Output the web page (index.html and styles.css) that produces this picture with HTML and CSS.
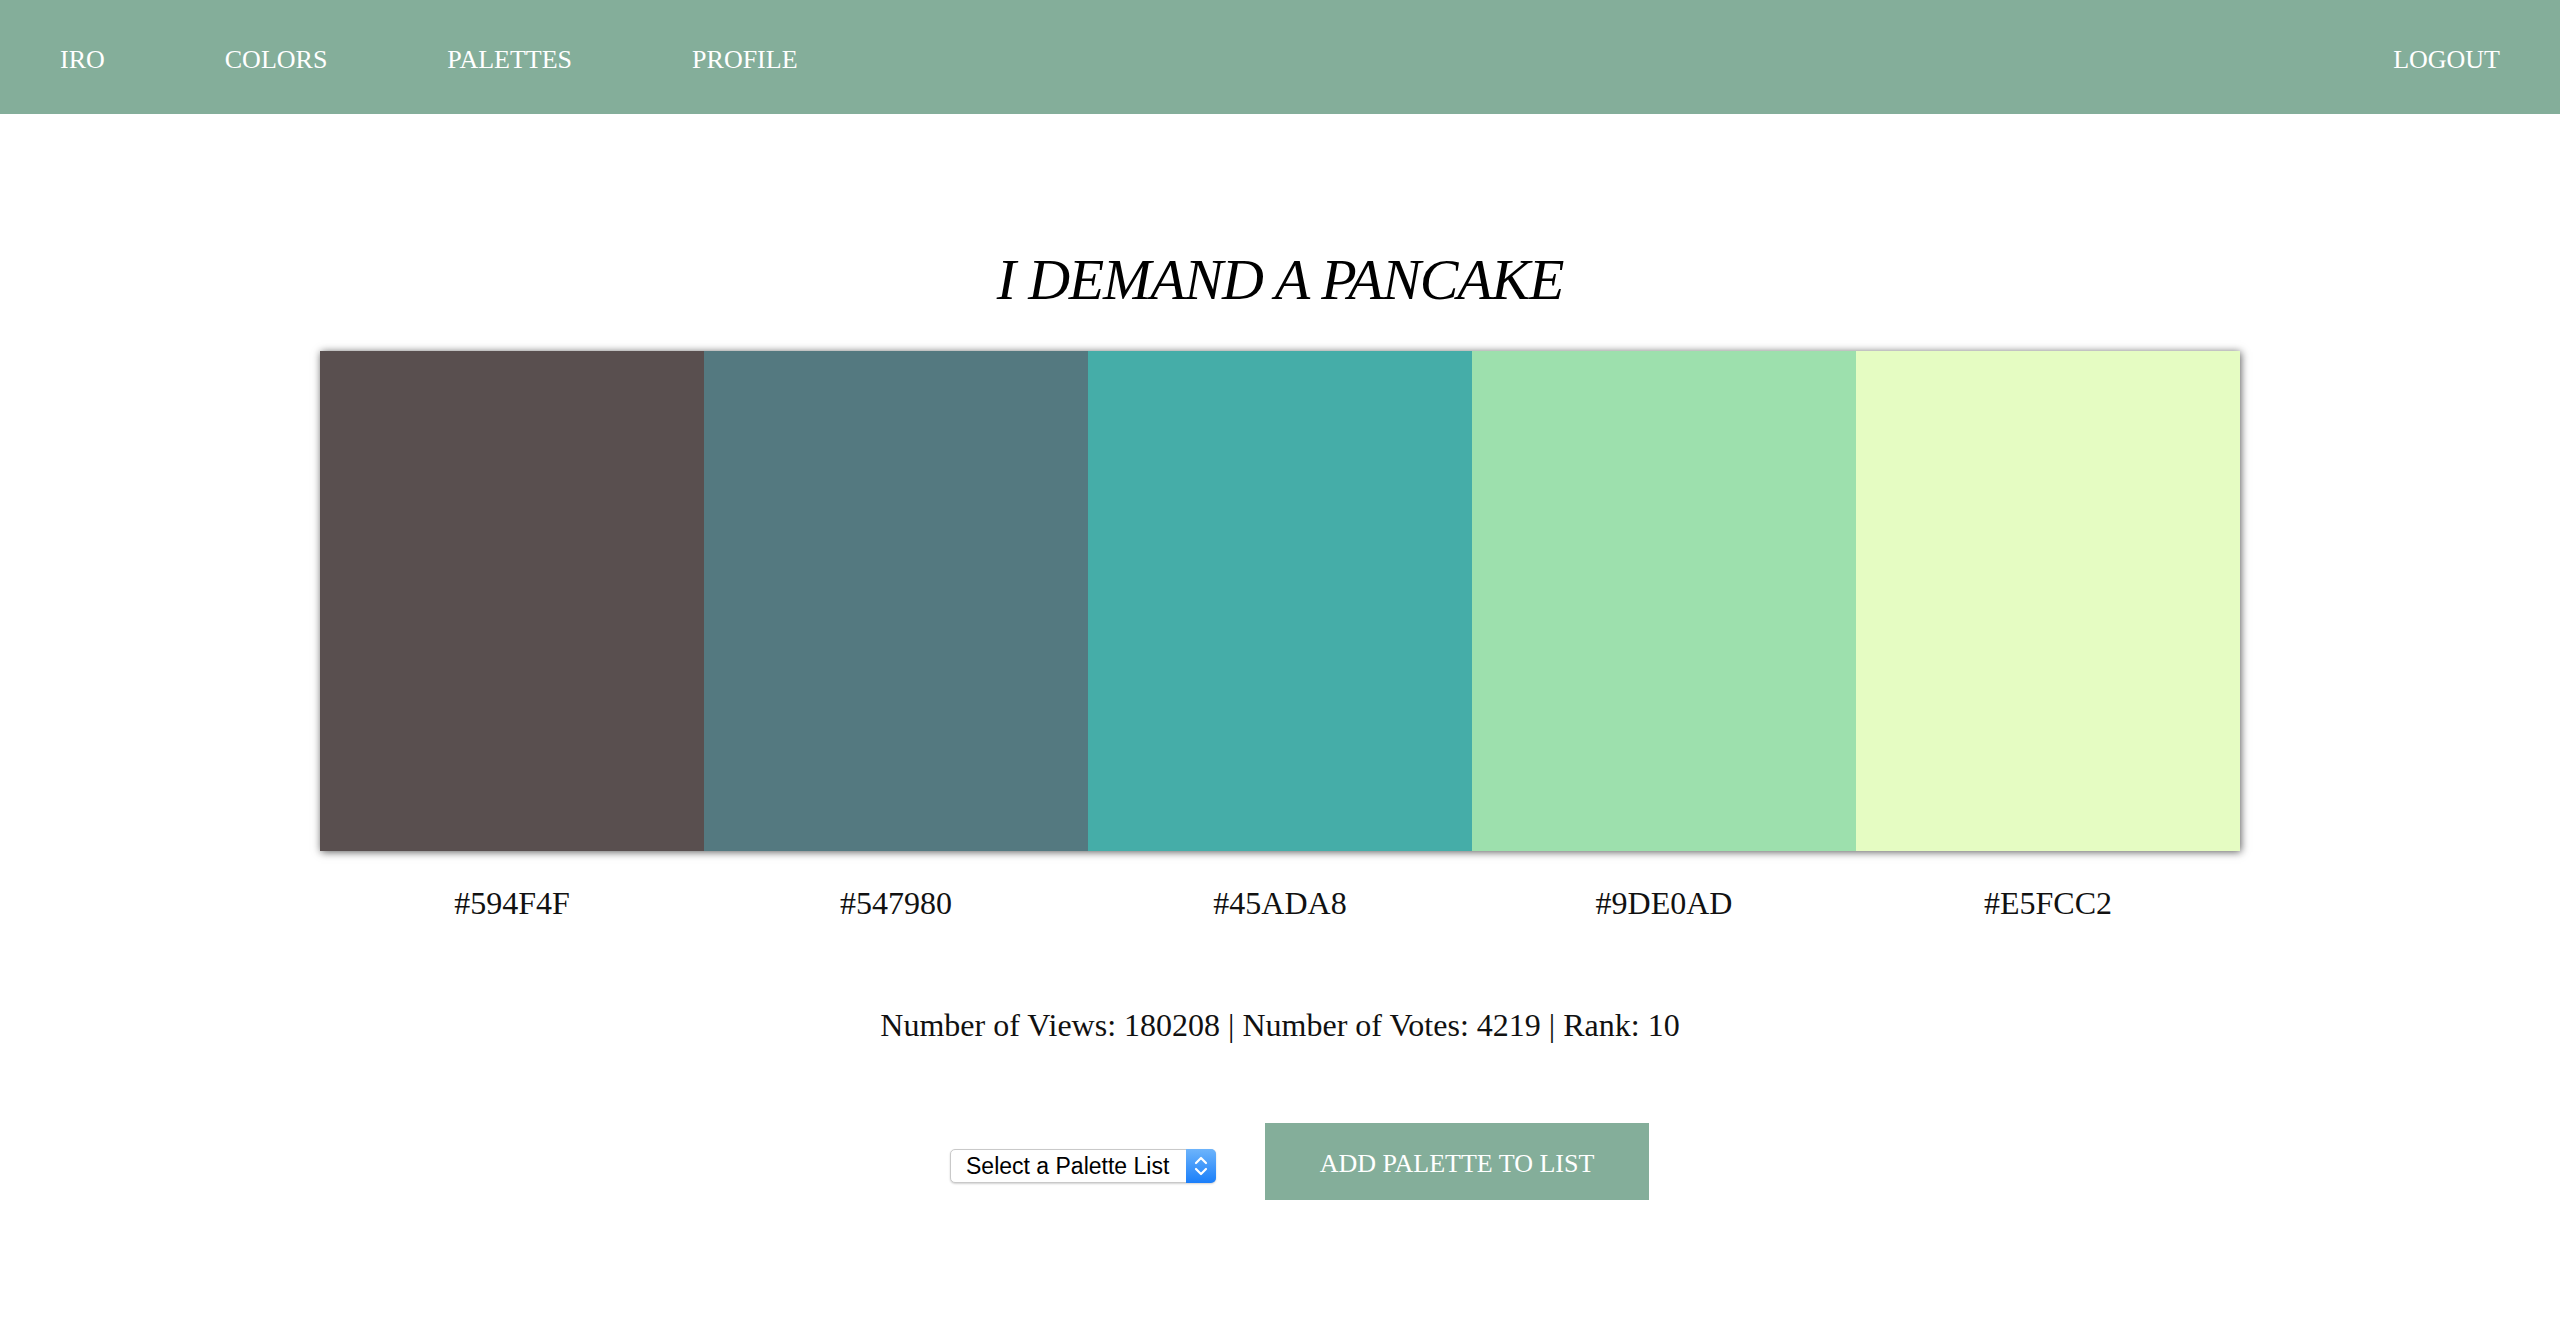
FILE: index.html
```html
<!DOCTYPE html>
<html lang="en">
<head>
<meta charset="utf-8">
<title>Iro - I Demand A Pancake</title>
<link rel="stylesheet" href="styles.css">
</head>
<body>
<nav class="topnav">
  <div class="nav-left">
    <a class="nav-link" href="#">IRO</a>
    <a class="nav-link" href="#">COLORS</a>
    <a class="nav-link" href="#">PALETTES</a>
    <a class="nav-link" href="#">PROFILE</a>
  </div>
  <a class="nav-link" href="#">LOGOUT</a>
</nav>
<main class="page">
  <h1 class="title">I DEMAND A PANCAKE</h1>
  <div class="palette">
    <div class="swatch" style="background:#594F4F"></div>
    <div class="swatch" style="background:#547980"></div>
    <div class="swatch" style="background:#45ADA8"></div>
    <div class="swatch" style="background:#9DE0AD"></div>
    <div class="swatch" style="background:#E5FCC2"></div>
  </div>
  <div class="labels">
    <span class="label">#594F4F</span>
    <span class="label">#547980</span>
    <span class="label">#45ADA8</span>
    <span class="label">#9DE0AD</span>
    <span class="label">#E5FCC2</span>
  </div>
  <p class="stats">Number of Views: 180208 | Number of Votes: 4219 | Rank: 10</p>
  <div class="actions">
    <div class="select-wrap">
      <select class="list-select">
        <option>Select a Palette List</option>
      </select>
      <svg class="select-arrows" width="30" height="34" viewBox="0 0 30 34" aria-hidden="true">
        <defs>
          <linearGradient id="blueg" x1="0" y1="0" x2="0" y2="1">
            <stop offset="0" stop-color="#6db4fb"/>
            <stop offset="1" stop-color="#1b7ffa"/>
          </linearGradient>
        </defs>
        <path d="M0 0 H25 A5 5 0 0 1 30 5 V29 A5 5 0 0 1 25 34 H0 Z" fill="url(#blueg)"/>
        <path d="M10 14 L15 9 L20 14" fill="none" stroke="#fff" stroke-width="2.2" stroke-linecap="round" stroke-linejoin="round"/>
        <path d="M10 20 L15 25 L20 20" fill="none" stroke="#fff" stroke-width="2.2" stroke-linecap="round" stroke-linejoin="round"/>
      </svg>
    </div>
    <button class="add-btn" type="button">ADD PALETTE TO LIST</button>
  </div>
</main>
</body>
</html>
```

FILE: styles.css
```css
html, body {
  margin: 0;
  padding: 0;
  background: #ffffff;
}

body {
  font-family: "Liberation Serif", "Times New Roman", serif;
  color: #111111;
}

.topnav {
  height: 114px;
  background: #84ae9a;
  display: flex;
  align-items: center;
  justify-content: space-between;
}

.nav-left {
  display: flex;
  align-items: center;
}

.nav-link {
  color: #ffffff;
  text-decoration: none;
  font-size: 26px;
  padding: 6px 60px 0;
  line-height: 40px;
}

.page {
  width: 1920px;
  margin: 0 auto;
  display: flex;
  flex-direction: column;
  align-items: center;
}

.title {
  margin: 131px 0 0;
  font-size: 58px;
  line-height: 70px;
  font-style: italic;
  font-weight: normal;
  letter-spacing: -1.2px;
  color: #000000;
}

.palette {
  margin-top: 36px;
  width: 1920px;
  height: 500px;
  display: flex;
  box-shadow: 1px 1px 8px rgba(0, 0, 0, 0.65);
}

.swatch {
  flex: 1 1 0;
}

.labels {
  margin-top: 32px;
  width: 1920px;
  display: flex;
}

.label {
  flex: 1 1 0;
  text-align: center;
  font-size: 32px;
  line-height: 40px;
  color: #111111;
}

.stats {
  margin: 82px 0 0;
  font-size: 32px;
  line-height: 40px;
  color: #111111;
}

.actions {
  margin-top: 78px;
  display: flex;
  align-items: center;
  gap: 49px;
  padding-left: 39px;
}

.select-wrap {
  position: relative;
  width: 266px;
  height: 34px;
  margin-top: 8px;
}

.list-select {
  appearance: none;
  -webkit-appearance: none;
  width: 266px;
  height: 34px;
  margin: 0;
  padding: 0 36px 0 15px;
  border: 1px solid #c9c9c9;
  border-radius: 5px;
  background: #ffffff;
  box-shadow: 0 1px 2px rgba(0, 0, 0, 0.18);
  font-family: "Liberation Sans", Arial, sans-serif;
  font-size: 23px;
  color: #000000;
  outline: none;
}

.select-arrows {
  position: absolute;
  right: 0;
  top: 0;
  pointer-events: none;
}

.add-btn {
  width: 384px;
  height: 77px;
  border: none;
  background: #84ae9a;
  color: #ffffff;
  font-family: "Liberation Serif", "Times New Roman", serif;
  font-size: 26px;
  padding: 4px 0 0;
  cursor: pointer;
}
```
